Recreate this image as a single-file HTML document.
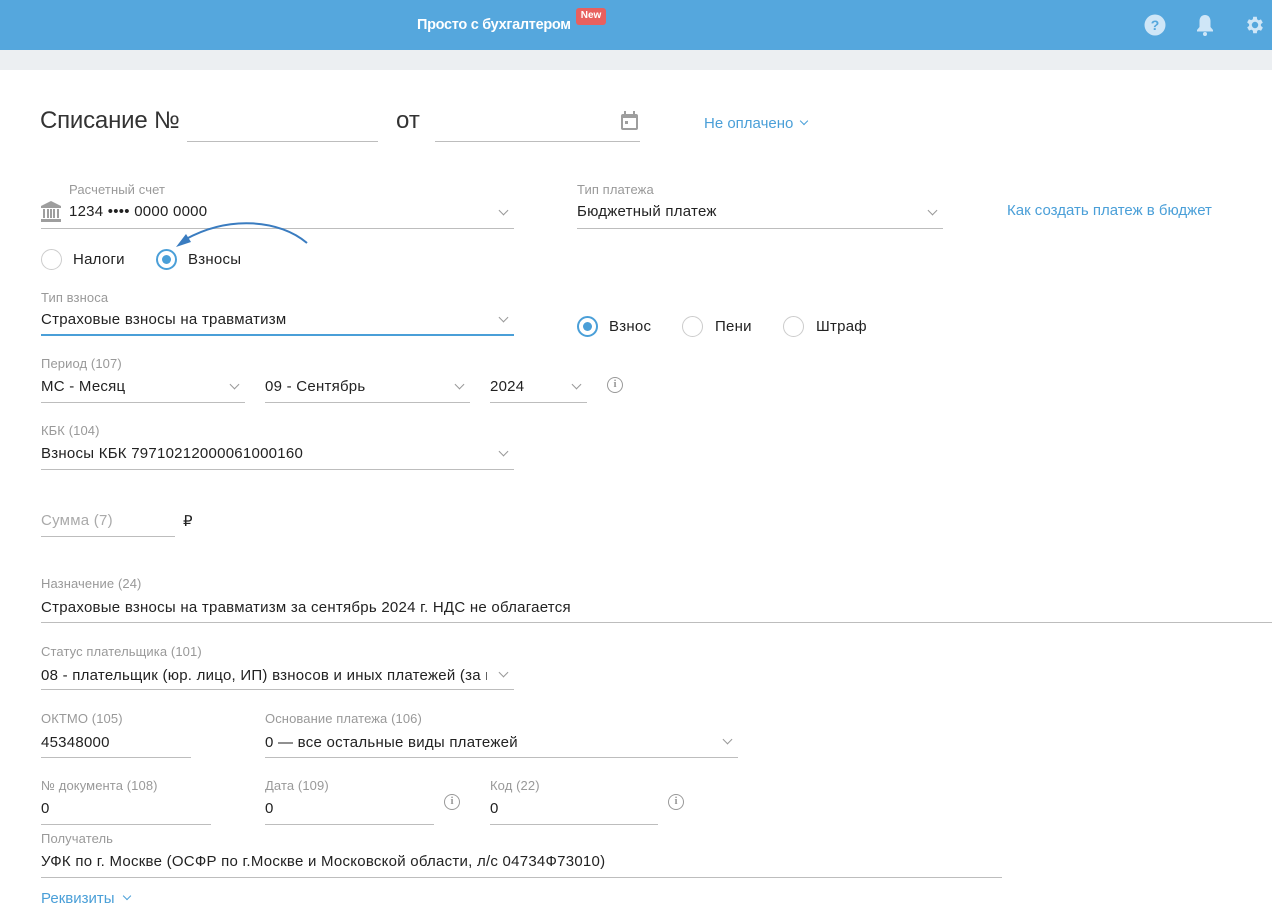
<!DOCTYPE html>
<html><head><meta charset="utf-8"><style>
*{margin:0;padding:0;box-sizing:border-box}
body{width:1272px;height:916px;overflow:hidden;background:#fff;font-family:"Liberation Sans",sans-serif;color:#333;position:relative}
.hdr{position:absolute;left:0;top:0;width:1272px;height:50px;background:#55a7dd}
.band{position:absolute;left:0;top:50px;width:1272px;height:20px;background:#eceff2}
.a{position:absolute;white-space:nowrap}
.lb{position:absolute;font-size:13px;color:#999;white-space:nowrap;letter-spacing:0.1px}
.v{position:absolute;font-size:15px;color:#222;white-space:nowrap;letter-spacing:0.25px}
.ln{position:absolute;height:1px;background:#bdbdbd}
.chev{position:absolute;width:7px;height:7px;border-right:1.5px solid #999;border-bottom:1.5px solid #999;transform:rotate(45deg)}
.r{position:absolute;width:21px;height:21px;border-radius:50%;border:1px solid #ccc;background:#fff}
.r.on{border:2px solid #4a9fd8}
.r.on:after{content:"";position:absolute;left:4px;top:4px;width:9px;height:9px;border-radius:50%;background:#4a9fd8}
.blue{color:#4a9fd8}
.info{position:absolute;width:16px;height:16px;border:1.5px solid #999;border-radius:50%;font-size:11px;font-weight:bold;color:#999;text-align:center;line-height:13px;font-family:"Liberation Serif",serif}
</style></head><body>
<div class="hdr"></div>
<div class="a" style="left:417px;top:17px;color:#fff;font-size:14.5px;font-weight:bold;letter-spacing:-0.3px">Просто с бухгалтером</div>
<div class="a" style="left:576px;top:8px;width:30px;height:17px;background:#e8605e;border-radius:3px;color:#fff;font-size:10px;font-weight:bold;text-align:center;line-height:16px">New</div>
<svg class="a" style="left:1144px;top:14px" width="22" height="22" viewBox="0 0 22 22"><circle cx="11" cy="11" r="10.5" fill="#cfe6f7"/><text x="11" y="16" font-size="14" font-weight="bold" text-anchor="middle" fill="#55a7dd" font-family="Liberation Sans">?</text></svg>
<svg class="a" style="left:1195px;top:13px" width="20" height="24" viewBox="0 0 20 24"><path d="M10 2c-3.5 0-5.5 2.8-5.5 6v6L2 17v1.5h16V17l-2.5-3V8c0-3.2-2-6-5.5-6z" fill="#cfe6f7"/><circle cx="10" cy="21" r="2" fill="#cfe6f7"/></svg>
<svg class="a" style="left:1244px;top:14px" width="22" height="22" viewBox="0 0 24 24"><path fill="#cfe6f7" d="M19.4 13a7.5 7.5 0 0 0 0-2l2.1-1.6-2-3.5-2.5 1a7 7 0 0 0-1.7-1L15 3h-4l-.4 2.7a7 7 0 0 0-1.7 1l-2.5-1-2 3.5L6.6 11a7.5 7.5 0 0 0 0 2l-2.1 1.6 2 3.5 2.5-1a7 7 0 0 0 1.7 1L11 21h4l.4-2.7a7 7 0 0 0 1.7-1l2.5 1 2-3.5zM13 15.5a3.5 3.5 0 1 1 0-7 3.5 3.5 0 0 1 0 7z" transform="translate(-1 0)"/></svg>
<div class="band"></div>

<div class="a" style="left:40px;top:107px;font-size:24px;color:#333;letter-spacing:-0.2px">Списание №</div>
<div class="ln" style="left:187px;top:141px;width:191px"></div>
<div class="a" style="left:396px;top:107px;font-size:24px;color:#333">от</div>
<div class="ln" style="left:435px;top:141px;width:205px"></div>
<svg class="a" style="left:620px;top:111px" width="19" height="20" viewBox="0 0 19 20"><rect x="1" y="3" width="17" height="16" rx="2" fill="#9e9e9e"/><rect x="3" y="7" width="13" height="10" fill="#fff"/><rect x="4" y="0" width="2" height="4" fill="#9e9e9e"/><rect x="13" y="0" width="2" height="4" fill="#9e9e9e"/><rect x="5" y="10" width="3" height="3" fill="#9e9e9e"/></svg>
<div class="a blue" style="left:704px;top:115px;font-size:15px">Не оплачено</div>
<div class="chev" style="left:801px;top:118px;width:6px;height:6px;border-color:#4a9fd8"></div>

<div class="lb" style="left:69px;top:182px">Расчетный счет</div>
<svg class="a" style="left:40px;top:201px" width="22" height="21" viewBox="0 0 22 21"><path d="M11 0L1 5v2h20V5z" fill="#9e9e9e"/><rect x="3" y="8" width="2" height="9" fill="#9e9e9e"/><rect x="7" y="8" width="2" height="9" fill="#9e9e9e"/><rect x="13" y="8" width="2" height="9" fill="#9e9e9e"/><rect x="17" y="8" width="2" height="9" fill="#9e9e9e"/><rect x="10" y="8" width="2" height="9" fill="#9e9e9e"/><rect x="1" y="18" width="20" height="3" fill="#9e9e9e"/></svg>
<div class="v" style="left:69px;top:203px">1234 •••• 0000 0000</div>
<div class="chev" style="left:500px;top:207px"></div>
<div class="ln" style="left:41px;top:228px;width:473px"></div>

<div class="lb" style="left:577px;top:182px">Тип платежа</div>
<div class="v" style="left:577px;top:203px">Бюджетный платеж</div>
<div class="chev" style="left:929px;top:207px"></div>
<div class="ln" style="left:577px;top:228px;width:366px"></div>
<div class="a blue" style="left:1007px;top:202px;font-size:15px">Как создать платеж в бюджет</div>

<svg class="a" style="left:170px;top:215px" width="140" height="35" viewBox="170 215 140 35"><path d="M307 243C280 220 230 215 186 239" fill="none" stroke="#3a7cc0" stroke-width="2"/><path d="M176 247l10-13 5 8z" fill="#3a7cc0"/></svg>

<div class="r" style="left:41px;top:249px"></div>
<div class="v" style="left:73px;top:251px">Налоги</div>
<div class="r on" style="left:156px;top:249px"></div>
<div class="v" style="left:188px;top:251px">Взносы</div>

<div class="lb" style="left:41px;top:290px">Тип взноса</div>
<div class="v" style="left:41px;top:311px">Страховые взносы на травматизм</div>
<div class="chev" style="left:500px;top:314px"></div>
<div class="ln" style="left:41px;top:334px;width:473px;height:2px;background:#4a9fd8"></div>

<div class="r on" style="left:577px;top:316px"></div>
<div class="v" style="left:609px;top:318px">Взнос</div>
<div class="r" style="left:682px;top:316px"></div>
<div class="v" style="left:715px;top:318px">Пени</div>
<div class="r" style="left:783px;top:316px"></div>
<div class="v" style="left:816px;top:318px">Штраф</div>

<div class="lb" style="left:41px;top:356px">Период (107)</div>
<div class="v" style="left:41px;top:378px">МС - Месяц</div>
<div class="chev" style="left:231px;top:381px"></div>
<div class="ln" style="left:41px;top:402px;width:204px"></div>
<div class="v" style="left:265px;top:378px">09 - Сентябрь</div>
<div class="chev" style="left:456px;top:381px"></div>
<div class="ln" style="left:265px;top:402px;width:205px"></div>
<div class="v" style="left:490px;top:378px">2024</div>
<div class="chev" style="left:573px;top:381px"></div>
<div class="ln" style="left:490px;top:402px;width:97px"></div>
<div class="info" style="left:607px;top:377px">i</div>

<div class="lb" style="left:41px;top:423px">КБК (104)</div>
<div class="v" style="left:41px;top:445px">Взносы КБК 79710212000061000160</div>
<div class="chev" style="left:500px;top:448px"></div>
<div class="ln" style="left:41px;top:469px;width:473px"></div>

<div class="v" style="left:41px;top:512px;color:#aaa">Сумма (7)</div>
<div class="ln" style="left:41px;top:536px;width:134px"></div>
<div class="v" style="left:183px;top:512px">₽</div>

<div class="lb" style="left:41px;top:576px">Назначение (24)</div>
<div class="v" style="left:41px;top:599px">Страховые взносы на травматизм за сентябрь 2024 г. НДС не облагается</div>
<div class="ln" style="left:41px;top:622px;width:1231px"></div>

<div class="lb" style="left:41px;top:644px">Статус плательщика (101)</div>
<div class="v" style="left:41px;top:667px;width:446px;overflow:hidden">08 - плательщик (юр. лицо, ИП) взносов и иных платежей (за исключением)</div>
<div class="chev" style="left:500px;top:669px"></div>
<div class="ln" style="left:41px;top:689px;width:473px"></div>

<div class="lb" style="left:41px;top:711px">ОКТМО (105)</div>
<div class="v" style="left:41px;top:734px">45348000</div>
<div class="ln" style="left:41px;top:757px;width:150px"></div>
<div class="lb" style="left:265px;top:711px">Основание платежа (106)</div>
<div class="v" style="left:265px;top:734px">0 — все остальные виды платежей</div>
<div class="chev" style="left:724px;top:736px"></div>
<div class="ln" style="left:265px;top:757px;width:473px"></div>

<div class="lb" style="left:41px;top:778px">№ документа (108)</div>
<div class="v" style="left:41px;top:800px">0</div>
<div class="ln" style="left:41px;top:824px;width:170px"></div>
<div class="lb" style="left:265px;top:778px">Дата (109)</div>
<div class="v" style="left:265px;top:800px">0</div>
<div class="ln" style="left:265px;top:824px;width:169px"></div>
<div class="info" style="left:444px;top:794px">i</div>
<div class="lb" style="left:490px;top:778px">Код (22)</div>
<div class="v" style="left:490px;top:800px">0</div>
<div class="ln" style="left:490px;top:824px;width:168px"></div>
<div class="info" style="left:668px;top:794px">i</div>

<div class="lb" style="left:41px;top:831px">Получатель</div>
<div class="v" style="left:41px;top:853px">УФК по г. Москве (ОСФР по г.Москве и Московской области, л/с 04734Ф73010)</div>
<div class="ln" style="left:41px;top:877px;width:961px"></div>
<div class="a blue" style="left:41px;top:890px;font-size:15px">Реквизиты</div>
<div class="chev" style="left:124px;top:893px;width:6px;height:6px;border-color:#4a9fd8"></div>
</body></html>
